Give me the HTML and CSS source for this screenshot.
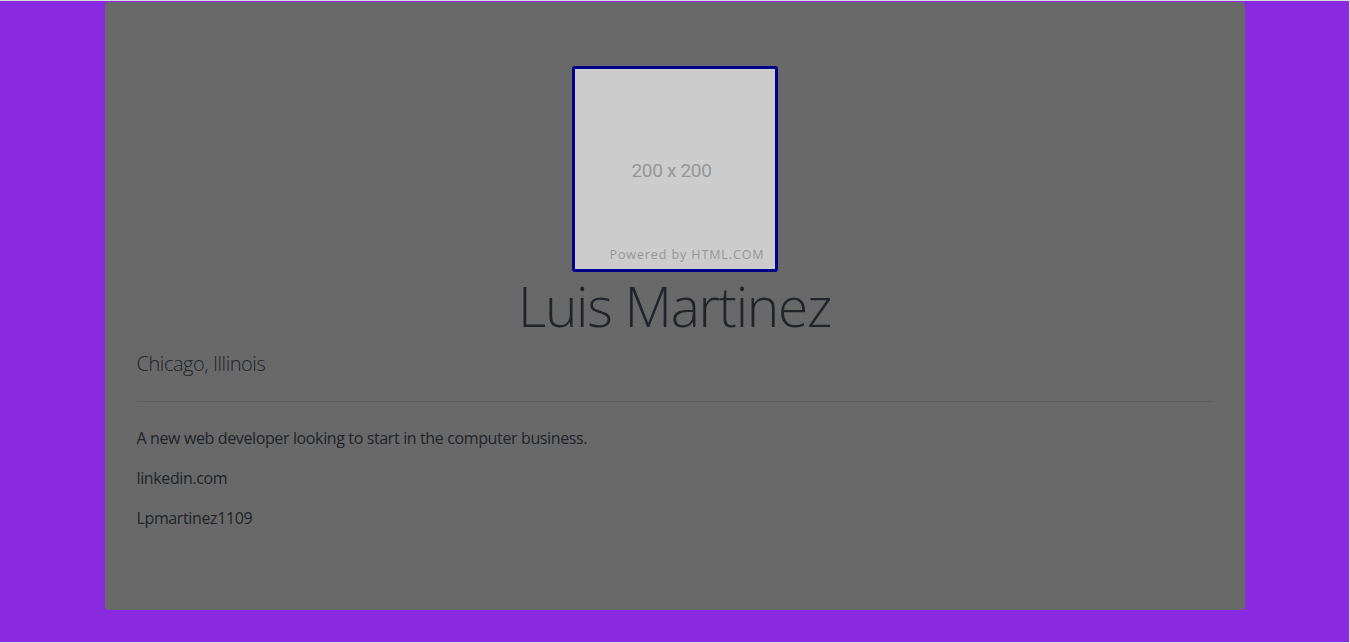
FILE: index.html
```html
<!DOCTYPE html>
<html lang="en">
<head>
<meta charset="utf-8">
<title>Luis Martinez</title>
<link rel="stylesheet" href="styles.css">
</head>
<body>
<div class="page">
  <div class="container">
    <div class="jumbotron">
      <div class="photo-wrap">
        <div class="photo">
          <span class="photo-size">200 x 200</span>
          <span class="photo-credit">Powered by HTML.COM</span>
        </div>
      </div>
      <h1 class="name">Luis Martinez</h1>
      <p class="lead">Chicago, Illinois</p>
      <hr class="divider">
      <p class="text">A new web developer looking to start in the computer business.</p>
      <p class="text">linkedin.com</p>
      <p class="text">Lpmartinez1109</p>
    </div>
  </div>
</div>
</body>
</html>
```

FILE: styles.css
```css
html, body {
  margin: 0;
  padding: 0;
}
body {
  background: #dcdcdc;
  font-family: "Open Sans", "Noto Sans", sans-serif;
  color: #212529;
}
.page {
  background: #8a2be2;
  height: 641px;
  margin: 1px 1px 1px 0;
  padding-top: 1px;
  box-sizing: border-box;
}
.container {
  width: 1140px;
  margin: 0 auto;
}
.jumbotron {
  background: #696969;
  border-radius: 4px;
  padding: 64px 32px 64px;
}
.photo-wrap {
  display: flex;
  justify-content: center;
}
.photo {
  position: relative;
  width: 200px;
  height: 200px;
  background: #cccccc;
  border: 3px solid #00008b;
  border-radius: 3px;
  display: flex;
  align-items: center;
  justify-content: center;
}
.photo-size {
  font-family: "Roboto", "Liberation Sans", sans-serif;
  font-size: 19px;
  letter-spacing: -0.3px;
  color: #969696;
  margin-top: 2px;
  margin-left: -6px;
}
.photo-credit {
  position: absolute;
  right: 10px;
  bottom: 6px;
  font-family: "Open Sans", sans-serif;
  font-size: 12.5px;
  letter-spacing: 0.9px;
  color: #969696;
}
.name {
  margin: 0 0 8px;
  font-size: 55px;
  font-weight: 300;
  line-height: 67px;
  letter-spacing: -1.3px;
  text-align: center;
}
.lead {
  margin: 0 0 16px;
  padding-top: 2px;
  font-size: 20px;
  font-weight: 300;
  line-height: 30px;
  letter-spacing: -0.45px;
}
.divider {
  margin: 22px 0 24px;
  border: 0;
  border-top: 1px solid rgba(0, 0, 0, 0.1);
}
.text {
  margin: 0 0 16px;
  font-size: 16px;
  line-height: 24px;
  letter-spacing: -0.37px;
}
```
